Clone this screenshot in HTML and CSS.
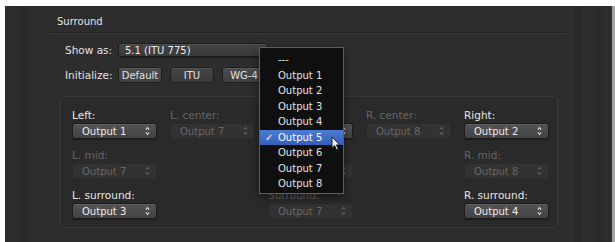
FILE: index.html
```html
<!DOCTYPE html>
<html lang="en">
<head>
    <meta charset="UTF-8">
    <title>Surround</title>
    <link rel="stylesheet" href="styles.css">
</head>
<body>
    <div class="panel">
        <div class="section">
            <div class="section-title">Surround</div>

            <div class="field">
                <span class="field-label">Show as:</span>
                <div class="popup wide">5.1 (ITU 775)</div>
            </div>

            <div class="field">
                <span class="field-label">Initialize:</span>
                <button class="btn">Default</button>
                <button class="btn dim">ITU</button>
                <button class="btn">WG-4</button>
            </div>

            <div class="group">
                <!-- row 1 -->
                <div class="cell">
                    <div class="cell-label">Left:</div>
                    <div class="popup">Output 1<svg class="arrows" viewBox="0 0 5 10"><path d="M0.8 3.6 L2.5 1.6 L4.2 3.6 M0.8 6.4 L2.5 8.4 L4.2 6.4"/></svg></div>
                </div>
                <div class="cell off">
                    <div class="cell-label">L. center:</div>
                    <div class="popup">Output 7<svg class="arrows" viewBox="0 0 5 10"><path d="M0.8 3.6 L2.5 1.6 L4.2 3.6 M0.8 6.4 L2.5 8.4 L4.2 6.4"/></svg></div>
                </div>
                <!-- center column, hidden under the open menu -->
                <div class="cell">
                    <div class="cell-label"></div>
                    <div class="popup"><svg class="arrows" viewBox="0 0 5 10"><path d="M0.8 3.6 L2.5 1.6 L4.2 3.6 M0.8 6.4 L2.5 8.4 L4.2 6.4"/></svg></div>
                </div>
                <div class="cell off">
                    <div class="cell-label">R. center:</div>
                    <div class="popup">Output 8<svg class="arrows" viewBox="0 0 5 10"><path d="M0.8 3.6 L2.5 1.6 L4.2 3.6 M0.8 6.4 L2.5 8.4 L4.2 6.4"/></svg></div>
                </div>
                <div class="cell">
                    <div class="cell-label">Right:</div>
                    <div class="popup">Output 2<svg class="arrows" viewBox="0 0 5 10"><path d="M0.8 3.6 L2.5 1.6 L4.2 3.6 M0.8 6.4 L2.5 8.4 L4.2 6.4"/></svg></div>
                </div>

                <!-- row 2 -->
                <div class="cell off">
                    <div class="cell-label">L. mid:</div>
                    <div class="popup">Output 7<svg class="arrows" viewBox="0 0 5 10"><path d="M0.8 3.6 L2.5 1.6 L4.2 3.6 M0.8 6.4 L2.5 8.4 L4.2 6.4"/></svg></div>
                </div>
                <div class="cell"></div>
                <div class="cell off">
                    <div class="cell-label"></div>
                    <div class="popup"><svg class="arrows" viewBox="0 0 5 10"><path d="M0.8 3.6 L2.5 1.6 L4.2 3.6 M0.8 6.4 L2.5 8.4 L4.2 6.4"/></svg></div>
                </div>
                <div class="cell"></div>
                <div class="cell off">
                    <div class="cell-label">R. mid:</div>
                    <div class="popup">Output 8<svg class="arrows" viewBox="0 0 5 10"><path d="M0.8 3.6 L2.5 1.6 L4.2 3.6 M0.8 6.4 L2.5 8.4 L4.2 6.4"/></svg></div>
                </div>

                <!-- row 3 -->
                <div class="cell">
                    <div class="cell-label">L. surround:</div>
                    <div class="popup">Output 3<svg class="arrows" viewBox="0 0 5 10"><path d="M0.8 3.6 L2.5 1.6 L4.2 3.6 M0.8 6.4 L2.5 8.4 L4.2 6.4"/></svg></div>
                </div>
                <div class="cell"></div>
                <div class="cell off">
                    <div class="cell-label">Surround:</div>
                    <div class="popup">Output 7<svg class="arrows" viewBox="0 0 5 10"><path d="M0.8 3.6 L2.5 1.6 L4.2 3.6 M0.8 6.4 L2.5 8.4 L4.2 6.4"/></svg></div>
                </div>
                <div class="cell"></div>
                <div class="cell">
                    <div class="cell-label">R. surround:</div>
                    <div class="popup">Output 4<svg class="arrows" viewBox="0 0 5 10"><path d="M0.8 3.6 L2.5 1.6 L4.2 3.6 M0.8 6.4 L2.5 8.4 L4.2 6.4"/></svg></div>
                </div>
            </div>
        </div>

        <!-- open popup menu -->
        <ul class="menu">
            <li>---</li>
            <li>Output 1</li>
            <li>Output 2</li>
            <li>Output 3</li>
            <li>Output 4</li>
            <li class="selected"><span class="check">&#10003;</span>Output 5</li>
            <li>Output 6</li>
            <li>Output 7</li>
            <li>Output 8</li>
        </ul>

        <svg class="cursor" viewBox="0 0 10 15">
            <path d="M1 1 L1 12 L3.6 9.6 L5.6 14 L7.4 13.2 L5.4 8.9 L8.8 8.9 Z"/>
        </svg>
    </div>
</body>
</html>
```

FILE: styles.css
```css
/* Reset */
* {
    margin: 0;
    padding: 0;
    box-sizing: border-box;
}

body {
    background-color: #fff;
    font-family: "DejaVu Sans", sans-serif;
    overflow: hidden;
}

/* Dark preferences window */
.panel {
    position: relative;
    margin: 6px 0 0 5px;
    height: 236px;
    padding-top: 10px;
    border-right: 3px solid #a3a3a3;
    background:
        linear-gradient(to right,
            transparent 14px, #282828 15px, #282828 22px, transparent 23px,
            transparent 34px, #2a2a2a 35px, transparent 37px,
            transparent 569px, #292929 570px, #292929 576px, transparent 577px,
            transparent 590px, #2a2a2a 591px, #2a2a2a 598px, transparent 599px),
        #2d2d2d;
}

.section {
    margin-left: 45px;
    width: 515px;
}

/* Section heading with etched rule */
.section-title {
    font-size: 10px;
    line-height: 12px;
    color: #e4e4e4;
    padding: 0 0 4px 7px;
    border-bottom: 1px solid #1e1e1e;
    box-shadow: 0 1px 0 #3c3c3c;
}

.field {
    display: flex;
    align-items: center;
    padding-left: 15px;
    margin-top: 10px;
}

.field:first-of-type {
    margin-top: 11px;
}

.field-label {
    width: 53px;
    font-size: 10.5px;
    color: #e2e2e2;
}

/* Buttons */
.btn {
    width: 44px;
    height: 16px;
    margin-right: 8px;
    font-family: inherit;
    font-size: 10px;
    color: #e0e0e0;
    background: linear-gradient(#4c4c4c, #404040);
    border: 1px solid #1f1f1f;
    border-radius: 3px;
    box-shadow: inset 0 1px 0 rgba(255, 255, 255, 0.08);
}

.btn.dim {
    background: linear-gradient(#444, #3a3a3a);
}

/* Popup buttons */
.popup {
    position: relative;
    display: flex;
    align-items: center;
    width: 85px;
    height: 16px;
    padding-left: 9px;
    font-size: 10px;
    color: #ececec;
    background: linear-gradient(#535353, #424242);
    border: 1px solid #1b1b1b;
    border-radius: 3px;
    box-shadow: inset 0 1px 0 rgba(255, 255, 255, 0.07), 0 1px 1px rgba(0, 0, 0, 0.3);
}

.popup.wide {
    width: 150px;
    height: 14px;
    padding-left: 6px;
    background: linear-gradient(#444, #3a3a3a);
}

.arrows {
    position: absolute;
    right: 6px;
    top: 2px;
    width: 5px;
    height: 10px;
    fill: none;
    stroke: #d8d8d8;
    stroke-width: 1.1;
}

/* Speaker grid */
.group {
    margin: 13px 0 0 10px;
    width: 498px;
    height: 132px;
    padding: 12px 0 0 11px;
    border: 1px solid #3a3a3a;
    border-radius: 5px;
    background-color: #2a2a2a;
    display: grid;
    grid-template-columns: repeat(5, 86px);
    grid-template-rows: repeat(3, 30px);
    column-gap: 12px;
    row-gap: 10px;
}

.cell-label {
    height: 12px;
    font-size: 10.5px;
    line-height: 12px;
    color: #e6e6e6;
    margin-bottom: 2px;
}

.cell.off .cell-label {
    color: #666;
}

.cell.off .popup {
    color: #676767;
    background: #323232;
    border-color: #2a2a2a;
    box-shadow: none;
}

.cell.off .arrows {
    stroke: #5e5e5e;
}

/* Open menu */
.menu {
    position: absolute;
    left: 254px;
    top: 41px;
    width: 85px;
    padding: 4px 0 1px;
    list-style: none;
    background-color: #0f0f0f;
    border: 1px solid #5e5e5e;
    box-shadow: 0 3px 8px rgba(0, 0, 0, 0.5);
}

.menu li {
    position: relative;
    height: 15.5px;
    line-height: 15.5px;
    padding-left: 18px;
    font-size: 10px;
    color: #e2e2e2;
}

.menu li.selected {
    color: #fff;
    background: linear-gradient(#4d7bd3, #335fb8);
}

.check {
    position: absolute;
    left: 5px;
    font-size: 10px;
}

.cursor {
    position: absolute;
    left: 326px;
    top: 130px;
    width: 10px;
    height: 15px;
    fill: #f0f0f0;
    stroke: #111;
    stroke-width: 0.9;
}
```
